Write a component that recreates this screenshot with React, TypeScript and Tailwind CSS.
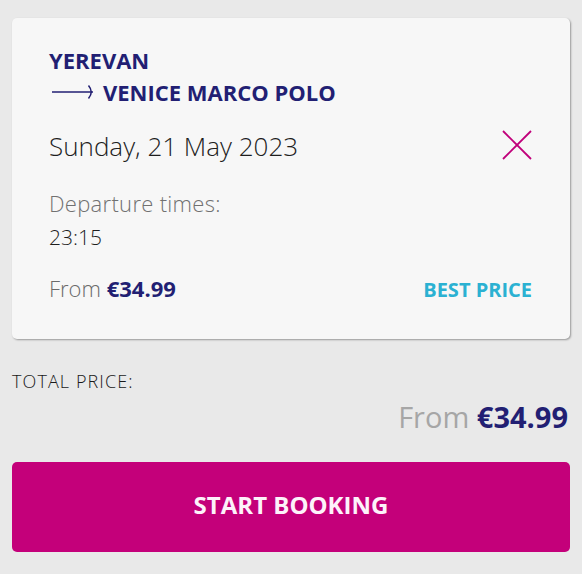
import React from "react";

export default function App() {
  return (
    <div
      className="w-[582px] h-[574px] bg-[#e9e9e9] px-[12px] pt-[18px] overflow-hidden"
      style={{ fontFamily: "'Open Sans', 'Noto Sans', sans-serif" }}
    >
      <div className="bg-[#f7f7f7] rounded-[5px] shadow-[1px_1px_2px_rgba(0,0,0,0.35)] h-[321px] pl-[37px] pr-[38px] pt-[26px]">
        <div className="text-[#221f73] font-bold text-[22px] leading-[32px]">
          <div>YEREVAN</div>
          <div className="flex items-center">
            <svg width="43" height="16" viewBox="0 0 43 16" className="ml-[3px] mr-[8px]">
              <line x1="0" y1="8" x2="41" y2="8" stroke="#221f73" strokeWidth="1.5" />
              <path d="M36.5 1.5 Q42 8 36.5 14.5" fill="none" stroke="#221f73" strokeWidth="1.5" />
            </svg>
            <span>VENICE MARCO POLO</span>
          </div>
        </div>
        <div className="flex items-start justify-between mt-[21px]">
          <div className="text-[#1e1e1e] text-[26px] font-light leading-[34px]">Sunday, 21 May 2023</div>
          <svg width="30" height="30" viewBox="0 0 30 30" className="mt-[1px]">
            <line x1="1" y1="1" x2="29" y2="29" stroke="#c0007a" strokeWidth="1.8" />
            <line x1="29" y1="1" x2="1" y2="29" stroke="#c0007a" strokeWidth="1.8" />
          </svg>
        </div>
        <div className="mt-[25px] text-[#717171] text-[22px] font-light leading-[30px] tracking-[0.3px]">Departure times:</div>
        <div className="text-[#1e1e1e] text-[21px] font-light leading-[34px] mt-[2px]">23:15</div>
        <div className="flex items-baseline justify-between mt-[18px] leading-[32px]">
          <div className="text-[22px]">
            <span className="text-[#6b6b6b] font-light">From </span>
            <span className="text-[#221f73] font-bold">€34.99</span>
          </div>
          <div className="text-[#2bb1d2] font-bold text-[20px]">BEST PRICE</div>
        </div>
      </div>
      <div className="mt-[30px] text-[#1a1a1a] text-[18px] font-light leading-[24px] tracking-[1.1px]">TOTAL PRICE:</div>
      <div className="flex justify-end items-baseline mt-[6px] pr-[2px] text-[29px] leading-[36px]">
        <span className="text-[#a6a6a6]">From&nbsp;</span>
        <span className="text-[#221f73] font-bold">€34.99</span>
      </div>
      <div className="mt-[27px] h-[90px] bg-[#c4007a] rounded-[5px] flex items-center justify-center pb-[4px] text-[#fdf2fa] font-bold text-[24px] leading-none">
        START BOOKING
      </div>
    </div>
  );
}
